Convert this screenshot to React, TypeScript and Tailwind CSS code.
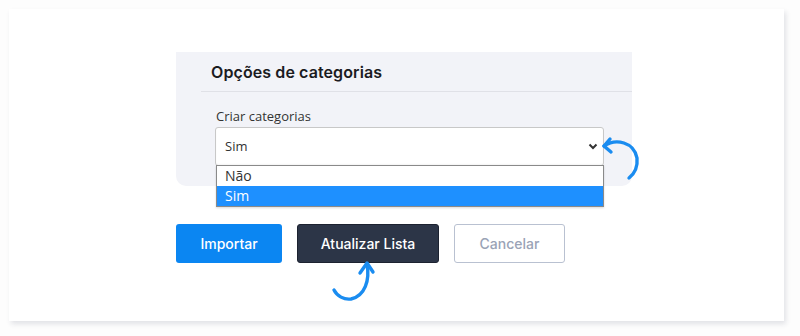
import React from "react";

export default function App() {
  return (
    <div className="w-[800px] h-[336px] bg-[#fdfdfd] p-[9px] overflow-hidden" style={{ fontFamily: "Inter, 'Noto Sans', sans-serif" }}>
      <div className="relative w-[775px] h-[312px] bg-white shadow-[2px_3px_5px_rgba(40,50,80,0.13)] pt-[43px] pl-[167px]">
        {/* Panel */}
        <div className="relative w-[456px] h-[134px] bg-[#f2f3f8] rounded-b-[10px]">
          <div className="pl-[35px] pt-[9px] h-[39px] text-[16px] font-semibold text-[#1b1b1f] leading-[22px] tracking-[0.1px]">
            Opções de categorias
          </div>
          <div className="ml-[25px] h-px bg-[#e0e1e7]" />
          <div className="pl-[40px] pt-[15px]" style={{ fontFamily: "'Open Sans', sans-serif" }}>
            <div className="text-[13px] text-[#333] leading-[18px] h-[20px]">Criar categorias</div>
            <div className="relative -ml-px w-[389px] h-[39px] bg-white border border-[#c8c8c8] rounded-[3px] flex items-center justify-between pl-[9px] pr-[5px] shadow-[inset_0_-1px_2px_rgba(0,0,0,0.04)]">
              <span className="text-[13px] text-[#333]">Sim</span>
              <svg width="10" height="7" viewBox="0 0 10 7">
                <path d="M1.5 1.5 L5 5 L8.5 1.5" fill="none" stroke="#333" strokeWidth="2" />
              </svg>
            </div>
            {/* open list */}
            <div className="absolute left-[40px] top-[113px] w-[388px] border border-[#8a8a8a] bg-white z-10 shadow-[0_1px_2px_rgba(0,0,0,0.15)]">
              <div className="h-[20px] pl-[8px] text-[14px] leading-[20px] text-[#333]">Não</div>
              <div className="h-[20px] pl-[8px] text-[14px] leading-[20px] text-white bg-[#1e90ff]">Sim</div>
            </div>
          </div>
        </div>

        {/* Buttons */}
        <div className="flex gap-[15px] mt-[38px]">
          <button className="w-[106px] h-[39px] rounded-[3px] bg-[#0b86f2] text-white text-[14px] font-medium">
            Importar
          </button>
          <button className="w-[142px] h-[39px] rounded-[3px] bg-[#2c3547] border border-[#1c2230] text-white text-[14px] font-medium">
            Atualizar Lista
          </button>
          <button className="w-[111px] h-[39px] rounded-[3px] bg-white border border-[#b9c1d1] text-[#9aa3b6] text-[14px] font-medium">
            Cancelar
          </button>
        </div>

        {/* Annotation arrows */}
        <svg className="absolute left-0 top-0 pointer-events-none" width="775" height="312" viewBox="9 9 775 312">
          <g fill="none" stroke="#1a8cf0" strokeWidth="3.4" strokeLinecap="round" strokeLinejoin="round">
            <path d="M604 146 C 616 138, 634 142, 637 158 C 638 168, 634 174, 629 178" />
            <path d="M610 139 L604 146 L611 152" />
            <path d="M367 264 C 370 280, 365 296, 351 299 C 344 300, 337 296, 334 290" />
            <path d="M360 273 L367 263 L373 272" />
          </g>
        </svg>
      </div>
    </div>
  );
}
